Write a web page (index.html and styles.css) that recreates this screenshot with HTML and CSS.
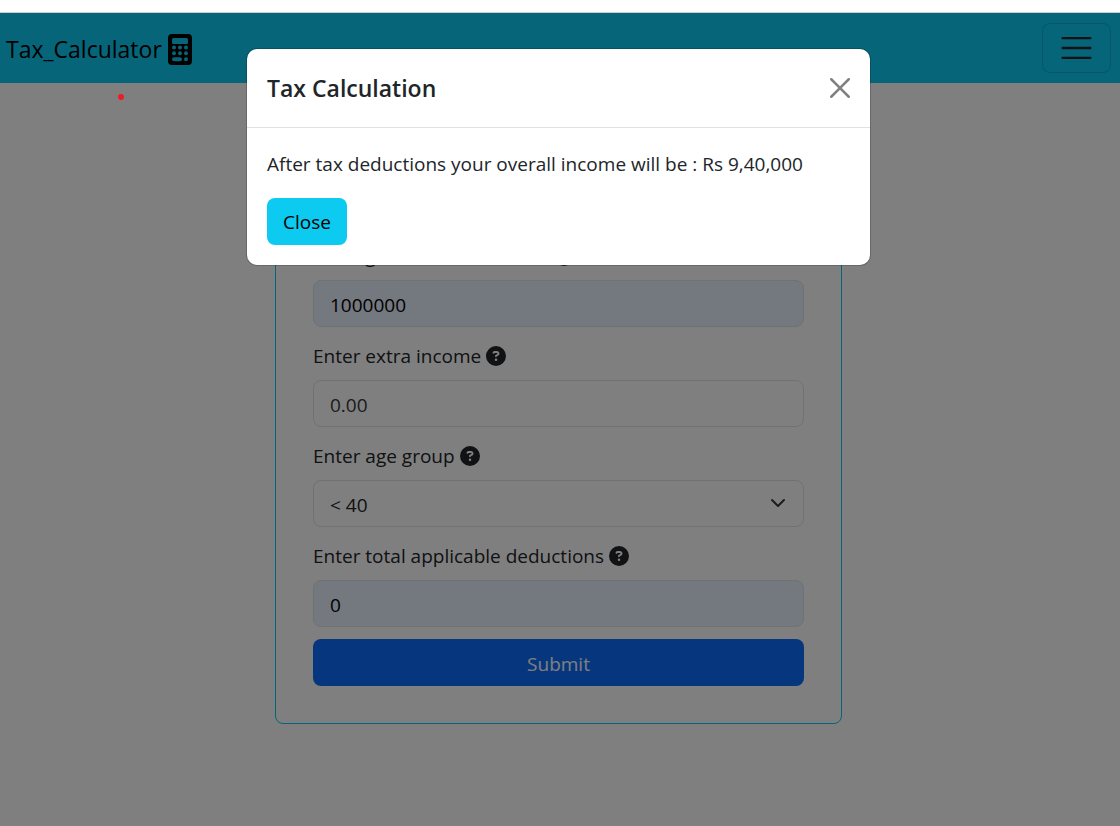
FILE: index.html
```html
<!DOCTYPE html>
<html lang="en">
<head>
<meta charset="utf-8">
<meta name="viewport" content="width=device-width, initial-scale=1">
<title>Tax Calculator</title>
<link rel="stylesheet" href="styles.css">
</head>
<body>
<svg class="sprite" aria-hidden="true">
  <symbol id="help" viewBox="0 0 512 512"><path fill="currentColor" d="M256 512A256 256 0 1 0 256 0a256 256 0 1 0 0 512zM169.800 165.300c7.900-22.300 29.100-37.300 52.800-37.300h58.300c34.900 0 63.100 28.300 63.100 63.100c0 22.600-12.100 43.500-31.700 54.800L280 264.400c-.2 13-10.900 23.600-24 23.600c-13.300 0-24-10.700-24-24V250.500c0-8.600 4.600-16.500 12.100-20.800l44.300-25.400c4.700-2.700 7.600-7.700 7.600-13.100c0-8.400-6.800-15.100-15.100-15.100H222.600c-3.400 0-6.400 2.100-7.500 5.300l-.4 1.200c-4.400 12.500-18.200 19-30.600 14.600s-19-18.200-14.600-30.600l.4-1.200zM224 352a32 32 0 1 1 64 0 32 32 0 1 1-64 0z"/></symbol>
</svg>
<div class="page">
  <header class="navbar">
    <a class="brand" href="#">Tax_Calculator
      <svg class="brand-icon" viewBox="0 0 24 31" aria-hidden="true">
        <path fill="currentColor" fill-rule="evenodd" d="M4 0h16a4 4 0 0 1 4 4v23a4 4 0 0 1-4 4H4a4 4 0 0 1-4-4V4a4 4 0 0 1 4-4zM5.500 4A1.500 1.500 0 0 0 4 5.500v3A1.500 1.500 0 0 0 5.500 10h13A1.500 1.500 0 0 0 20 8.500v-3A1.500 1.500 0 0 0 18.500 4z
        M4 13.500a2 2 0 1 0 4 0 2 2 0 1 0-4 0zM10 13.500a2 2 0 1 0 4 0 2 2 0 1 0-4 0zM16 13.500a2 2 0 1 0 4 0 2 2 0 1 0-4 0z
        M4 19.300a2 2 0 1 0 4 0 2 2 0 1 0-4 0zM10 19.300a2 2 0 1 0 4 0 2 2 0 1 0-4 0zM16 19.300a2 2 0 1 0 4 0 2 2 0 1 0-4 0z
        M6 23.200h6a2 2 0 0 1 0 4H6a2 2 0 0 1 0-4zM16 25.200a2 2 0 1 0 4 0 2 2 0 1 0-4 0z"/>
      </svg>
    </a>
    <button class="toggler" type="button" aria-label="Toggle navigation">
      <svg viewBox="0 0 30 30" aria-hidden="true"><path stroke="currentColor" stroke-width="2" stroke-miterlimit="10" d="M3 7h24M3 15h24M3 23h24"/></svg>
    </button>
  </header>

  <main class="content">
    <form class="tax-form">
      <div class="field">
        <label for="gross">Enter gross annual income</label>
        <svg class="help"><use href="#help"/></svg>
        <input class="control filled" id="gross" type="text" value="1000000">
      </div>
      <div class="field">
        <label for="extra">Enter extra income</label>
        <svg class="help"><use href="#help"/></svg>
        <input class="control" id="extra" type="text" placeholder="0.00">
      </div>
      <div class="field">
        <label for="age">Enter age group</label>
        <svg class="help"><use href="#help"/></svg>
        <div class="select-wrap">
          <select class="control" id="age"><option>&lt; 40</option><option>&ge; 40 &amp; &lt; 60</option><option>&ge; 60</option></select>
          <svg class="chevron" viewBox="0 0 16 16" aria-hidden="true"><path fill="none" stroke="currentColor" stroke-linecap="round" stroke-linejoin="round" stroke-width="2" d="m2 5 6 6 6-6"/></svg>
        </div>
      </div>
      <div class="field">
        <label for="deductions">Enter total applicable deductions</label>
        <svg class="help"><use href="#help"/></svg>
        <input class="control filled" id="deductions" type="text" value="0">
      </div>
      <button class="submit" type="submit">Submit</button>
    </form>
  </main>

  <div class="backdrop">
    <span class="dot"></span>
    <section class="modal" role="dialog" aria-modal="true" aria-labelledby="modal-title">
      <div class="modal-header">
        <h1 id="modal-title">Tax Calculation</h1>
        <button class="dismiss" type="button" aria-label="Dismiss">
          <svg viewBox="0 0 16 16" aria-hidden="true"><path fill="currentColor" d="M.293.293a1 1 0 0 1 1.414 0L8 6.586 14.293.293a1 1 0 1 1 1.414 1.414L9.414 8l6.293 6.293a1 1 0 0 1-1.414 1.414L8 9.414l-6.293 6.293a1 1 0 0 1-1.414-1.414L6.586 8 .293 1.707a1 1 0 0 1 0-1.414z"/></svg>
        </button>
      </div>
      <div class="modal-body">
        <p>After tax deductions your overall income will be : Rs 9,40,000</p>
        <button class="close" type="button">Close</button>
      </div>
    </section>
  </div>
</div>
</body>
</html>
```
FILE: styles.css
```css
*, *::before, *::after { box-sizing: border-box; }

body {
  margin: 0;
  padding-top: 12px;
  background: #fff;
  color: #212529;
  font-family: "Segoe UI", "Open Sans", "Noto Sans", sans-serif;
  font-size: 19px;
  line-height: 30px;
}

button, input, select { font: inherit; color: inherit; }

.sprite { display: none; }

.page {
  position: relative;
  min-height: calc(100vh - 12px);
  border-top: 1px solid #d0d0d0;
}

.navbar {
  display: flex;
  align-items: center;
  justify-content: space-between;
  padding: 10px 9px 10px 6px;
  background: #0dcaf0;
}

.brand {
  display: flex;
  align-items: center;
  gap: 6px;
  padding-top: 2px;
  color: #000;
  font-size: 23px;
  line-height: 38px;
  text-decoration: none;
}

.brand-icon { width: 24px; height: 31px; }

.toggler {
  padding: 5px 15px;
  border: 1px solid rgba(0, 0, 0, .15);
  border-radius: 8px;
  background: none;
  color: #212529;
}

.toggler svg { display: block; width: 37px; height: 38px; }

.content {
  display: flex;
  justify-content: center;
  padding: 118px 3px 0 0;
}

.tax-form {
  width: 51%;
  max-width: 567px;
  padding: 37px;
  border: 1px solid #0dcaf0;
  border-radius: 8px;
}

.field { padding-top: 2px; margin-bottom: 12px; }

.field:last-of-type { margin-bottom: 12px; }

.help {
  width: 20px;
  height: 20px;
  vertical-align: -3px;
}

.control {
  display: block;
  width: 100%;
  height: 47px;
  margin-top: 9px;
  padding: 8px 16px 6px;
  border: 1px solid #dee2e6;
  border-radius: 8px;
  background: #fff;
  appearance: none;
}

.control::placeholder { color: #34383c; opacity: 1; }

.control.filled { background: #e8f0fe; color: #000; }

.select-wrap { position: relative; }

.chevron {
  position: absolute;
  top: 15px;
  right: 18px;
  width: 16px;
  height: 16px;
  color: #343a40;
  pointer-events: none;
}

.submit {
  display: block;
  width: 100%;
  height: 47px;
  padding: 2px 16px 0;
  border: 0;
  border-radius: 8px;
  background: #0d6efd;
  color: #fff;
}

.backdrop {
  position: absolute;
  inset: 0;
  display: flex;
  align-items: flex-start;
  justify-content: center;
  padding: 36px 3px 0 0;
  background: rgba(0, 0, 0, .5);
}

.dot {
  position: absolute;
  top: 81px;
  left: 118px;
  width: 6px;
  height: 6px;
  border-radius: 50%;
  background: #ed1c24;
}

.modal {
  width: 623px;
  max-width: 100%;
  border-radius: 10px;
  background: #fff;
  box-shadow: 0 0 0 1px rgba(0, 0, 0, .18);
}

.modal-header {
  display: flex;
  align-items: center;
  justify-content: space-between;
  padding: 20px;
  border-bottom: 1px solid #dee2e6;
}

.modal-header h1 {
  margin: 0;
  font-size: 23px;
  line-height: 38px;
  font-weight: 600;
}

.dismiss {
  padding: 0;
  border: 0;
  background: none;
  color: #808080;
}

.dismiss svg { display: block; width: 20px; height: 20px; }

.modal-body { padding: 20px; }

.modal-body p { margin: 0 0 18px; line-height: 32px; }

.close {
  height: 47px;
  padding: 0 16px;
  border: 0;
  border-radius: 8px;
  background: #0dcaf0;
  color: #000;
}
```
